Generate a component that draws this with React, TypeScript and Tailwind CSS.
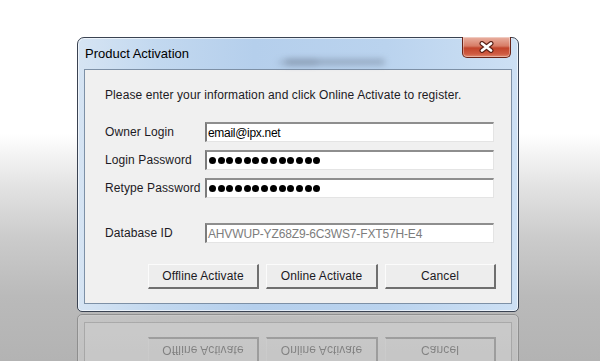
import React from "react";

const FONT = { fontFamily: '"Liberation Sans", Arial, sans-serif' };

function Dots() {
  return (
    <div className="flex items-center gap-[1.7px] pl-[1px]">
      {Array.from({ length: 13 }).map((_, i) => (
        <span key={i} className="block w-[7px] h-[7px] rounded-full bg-black" />
      ))}
    </div>
  );
}

function Row({ label, children }: { label: string; children: React.ReactNode }) {
  return (
    <div className="flex items-center h-[20px]">
      <div className="w-[100px] text-[12px] leading-[14px] text-[#1c1a24] tracking-[0.1px] whitespace-nowrap">{label}</div>
      <div className="w-[289px] h-[20px] bg-white border-t-2 border-l-2 border-r border-b border-t-[#8e8e8e] border-l-[#7c7c7c] border-r-[#e4e4e4] border-b-[#e4e4e4] flex items-center pl-[1px] overflow-hidden">
        {children}
      </div>
    </div>
  );
}

function Btn({ label, w }: { label: string; w: string }) {
  return (
    <div
      className={`${w} h-[25px] flex items-center justify-center bg-[#ededed] border-t border-l border-t-[#fbfbfb] border-l-[#fbfbfb] border-r-2 border-b-2 border-r-[#6f6f6f] border-b-[#6f6f6f] text-[12px] text-[#1c1a24] tracking-[0.1px]`}
    >
      {label}
    </div>
  );
}

function Dialog() {
  return (
    <div
      className="relative w-[442px] h-[275px] flex flex-col rounded-t-[7px] rounded-b-[5px] border border-[#3a4352] bg-[linear-gradient(90deg,#d6e4f3_0%,#c2d8ef_18%,#b5cfec_40%,#bad3ee_70%,#cde0f4_100%)] shadow-[inset_0_0_0_1px_rgba(255,255,255,0.6)]"
      style={FONT}
    >
      <div className="relative h-[31px] flex items-center pl-[7px]">
        <div className="absolute left-[200px] top-[22px] w-[40px] h-[5px] rounded-full bg-[#8091a8] opacity-40 blur-[3px]" />
        <div className="absolute left-[207px] top-[21px] w-[100px] h-[6px] rounded-full bg-[#6e7d92] opacity-50 blur-[3px]" />
        <span className="relative text-[13px] leading-[15px] text-black">Product Activation</span>
      </div>
      <div className="absolute top-[-1px] right-[7px] w-[49px] h-[21px] rounded-b-[5px] border border-t-0 border-[#6a2418] bg-[linear-gradient(180deg,#e9b1a2_0%,#d77c66_45%,#c2442b_55%,#cf5b42_85%,#e08a6f_100%)] flex items-center justify-center shadow-[inset_0_0_0_1px_rgba(255,255,255,0.35)]">
        <svg width="15" height="12" viewBox="0 0 15 12">
          <path d="M3 2.5 L12 9.5 M12 2.5 L3 9.5" stroke="#5a2016" strokeWidth="5" strokeLinecap="round" />
          <path d="M3 2.5 L12 9.5 M12 2.5 L3 9.5" stroke="#ffffff" strokeWidth="2.8" strokeLinecap="round" />
        </svg>
      </div>
      <div className="mx-[6px] h-[235px] border border-[#7d90a6] bg-[#f0f0f0] flex flex-col pl-[20px] pr-[15px] pt-[18px]">
        <div className="text-[12px] leading-[14px] text-[#1c1a24] tracking-[0.1px] whitespace-nowrap">
          Please enter your information and click Online Activate to register.
        </div>
        <div className="flex flex-col gap-[8px] mt-[20px]">
          <Row label="Owner Login">
            <span className="text-[12px] leading-[14px] text-black tracking-[-0.3px]">email@ipx.net</span>
          </Row>
          <Row label="Login Password">
            <Dots />
          </Row>
          <Row label="Retype Password">
            <Dots />
          </Row>
        </div>
        <div className="mt-[25px]">
          <Row label="Database ID">
            <span className="text-[12px] leading-[14px] text-[#7d7d7d] tracking-[-0.15px]">AHVWUP-YZ68Z9-6C3WS7-FXT57H-E4</span>
          </Row>
        </div>
        <div className="flex justify-end gap-[7px] mt-[21px]">
          <Btn label="Offline Activate" w="w-[111px]" />
          <Btn label="Online Activate" w="w-[112px]" />
          <Btn label="Cancel" w="w-[111px]" />
        </div>
      </div>
    </div>
  );
}

export default function App() {
  return (
    <div className="w-[600px] h-[361px] overflow-hidden bg-[linear-gradient(180deg,#ffffff_0%,#ffffff_37%,#e2e2e2_52%,#cbcbcb_66%,#bababa_82%,#b3b3b3_100%)] flex flex-col pl-[77px] pt-[37px]">
      <Dialog />
      <div className="mt-[2px] h-[47px] overflow-hidden">
        <div className="-scale-y-100 opacity-[0.33] grayscale">
          <Dialog />
        </div>
      </div>
    </div>
  );
}
